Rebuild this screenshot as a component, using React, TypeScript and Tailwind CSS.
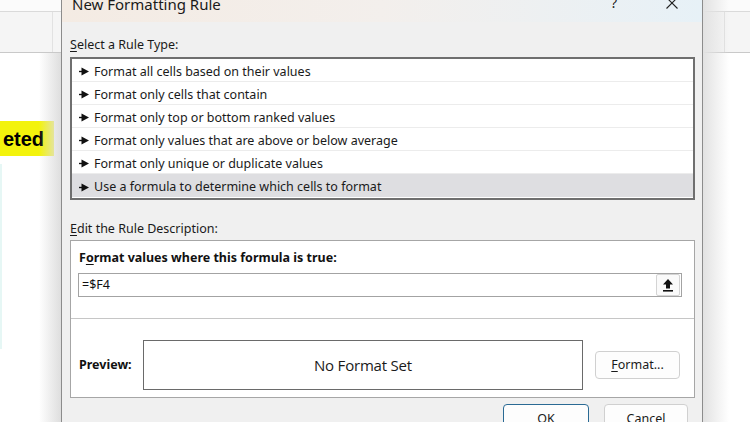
import React from "react";

const ui = { fontFamily: '"Noto Sans", "Open Sans", sans-serif' };

function Pointer() {
  return (
    <svg width="10" height="9" viewBox="0 0 10 9" className="shrink-0">
      <path d="M0 4.5 H4" stroke="#111" strokeWidth="1.4" />
      <path d="M2.5 0.6 L10 4.5 L2.5 8.4 Z" fill="#111" />
    </svg>
  );
}

const rules = [
  "Format all cells based on their values",
  "Format only cells that contain",
  "Format only top or bottom ranked values",
  "Format only values that are above or below average",
  "Format only unique or duplicate values",
  "Use a formula to determine which cells to format",
];

export default function App() {
  return (
    <div className="w-[750px] h-[422px] overflow-hidden bg-white flex" style={ui}>
      {/* left sheet strip */}
      <div className="relative w-[61px] shrink-0 flex flex-col bg-white">
        <div className="h-[12px] bg-[#fbfbfb] border-b border-[#dadada]" />
        <div className="h-[41px] bg-[#f5f5f5] border-b border-[#c9c9c9] flex">
          <div className="w-[53px] border-r border-[#e2e2e2]" />
        </div>
        <div className="mt-[68px] h-[35px] w-[54px] bg-[#f3f30c] flex items-center justify-end pr-[10px] overflow-hidden">
          <span
            className="text-[20px] font-bold text-black whitespace-nowrap leading-none"
            style={{ fontFamily: '"Liberation Sans", Arial, sans-serif' }}
          >
            eted
          </span>
        </div>
        <div className="mt-[8px] w-[2px] h-[185px] bg-[#e6f7f5]" />
        <div className="absolute right-0 top-[53px] bottom-0 w-[22px] bg-linear-to-r from-transparent to-[#dedede]" />
      </div>

      {/* dialog */}
      <div className="w-[642px] shrink-0 flex flex-col bg-[#f0f0f0] border-x border-[#8c8c8c]">
        {/* title bar */}
        <div className="h-[22px] shrink-0 bg-linear-to-r from-[#f4ebe3] via-[#f3efec] to-[#e7f1f7] flex items-start overflow-hidden relative">
          <span className="ml-[10px] mt-[-5px] text-[15px] leading-[18px] text-[#1a1a1a] whitespace-nowrap">
            New Formatting Rule
          </span>
          <span className="ml-auto mt-[-6px] text-[14px] leading-[18px] text-[#222]">?</span>
          <svg width="12" height="12" viewBox="0 0 12 12" className="ml-[49px] mr-[24px] mt-[-3px]">
            <path d="M0.5 0.5 L11.5 11.5 M11.5 0.5 L0.5 11.5" stroke="#222" strokeWidth="1.1" />
          </svg>
        </div>

        <div className="flex flex-col pl-[8px] pr-[7px]">
          <div className="mt-[15px] h-[16px] text-[12.5px] leading-[16px] text-[#1a1a1a]">
            <span className="underline underline-offset-2">S</span>elect a Rule Type:
          </div>
          <div className="mt-[4px] h-[143px] border-2 border-[#6f6f6f] bg-white flex flex-col">
            {rules.map((r, i) => (
              <div
                key={r}
                className={
                  i === rules.length - 1
                    ? "h-[23px] shrink-0 flex items-center gap-[5px] pl-[7px] pt-[3px] bg-[#dedee1] text-[12.5px] text-[#1a1a1a] whitespace-nowrap"
                    : "h-[23px] shrink-0 flex items-center gap-[5px] pl-[7px] pt-[3px] border-b border-[#ececec] text-[12.5px] text-[#1a1a1a] whitespace-nowrap"
                }
              >
                <Pointer />
                <span className="leading-[16px]">{r}</span>
              </div>
            ))}
          </div>

          <div className="mt-[21px] h-[16px] text-[12.5px] leading-[16px] text-[#1a1a1a]">
            <span className="underline underline-offset-2">E</span>dit the Rule Description:
          </div>
          <div className="mt-[3px] h-[158px] border border-[#a6a6a6] bg-white flex flex-col">
            <div className="mt-[9px] ml-[8px] h-[16px] text-[12.5px] leading-[16px] font-bold text-[#111]">
              F<span className="underline underline-offset-2">o</span>rmat values where this formula is true:
            </div>
            <div className="mt-[7px] ml-[7px] mr-[12px] h-[24px] border border-[#a3a3a3] flex items-center">
              <span className="ml-[3px] text-[12.5px] text-[#111]">=$F4</span>
              <div className="ml-auto mr-[1px] w-[24px] h-[22px] border border-[#d4d4d4] rounded-[2px] bg-[#fafafa] flex items-center justify-center">
                <svg width="12" height="14" viewBox="0 0 12 14">
                  <path d="M6 1 L11 6.5 H8 V10.5 H4 V6.5 H1 Z" fill="#111" />
                  <rect x="1" y="12" width="10" height="1.6" fill="#111" />
                </svg>
              </div>
            </div>
            <div className="mt-[21px] h-px bg-[#c6c6c6]" />
            <div className="mt-[21px] flex items-center">
              <span className="ml-[8px] w-[64px] text-[12.5px] font-bold text-[#111]">Preview:</span>
              <div className="w-[440px] h-[50px] border border-[#6a6a6a] flex items-center justify-center">
                <span
                  className="text-[15px] text-[#1a1a1a] tracking-[-0.2px]"
                  style={{ fontFamily: '"Open Sans", "Noto Sans", sans-serif' }}
                >
                  No Format Set
                </span>
              </div>
              <div className="ml-[12px] w-[85px] h-[28px] border border-[#d0d0d0] rounded-[4px] bg-[#fdfdfd] flex items-center justify-center text-[12.5px] text-[#1a1a1a]">
                <span className="underline underline-offset-2">F</span>ormat...
              </div>
            </div>
          </div>

          <div className="mt-[6px] flex justify-end pr-[7px] gap-[15px]">
            <div className="w-[86px] h-[30px] border border-[#2a6a94] rounded-[4px] bg-[#fdfdfd] flex items-start justify-center pt-[5px] text-[12.5px] text-[#1a1a1a]">
              OK
            </div>
            <div className="w-[84px] h-[30px] border border-[#d0d0d0] rounded-[4px] bg-[#fdfdfd] flex items-start justify-center pt-[5px] text-[12.5px] text-[#1a1a1a]">
              Cancel
            </div>
          </div>
        </div>
      </div>

      {/* right sheet strip */}
      <div className="relative flex-1 flex flex-col bg-white">
        <div className="h-[12px] bg-[#fbfbfb] border-b border-[#dadada]" />
        <div className="h-[41px] bg-[#f5f5f5] border-b border-[#c9c9c9] flex">
          <div className="w-[22px] border-r border-[#e0e0e0]" />
        </div>
        <div className="absolute left-0 top-0 bottom-0 w-[26px] bg-linear-to-r from-[#e2e2e2] to-transparent" />
      </div>
    </div>
  );
}
